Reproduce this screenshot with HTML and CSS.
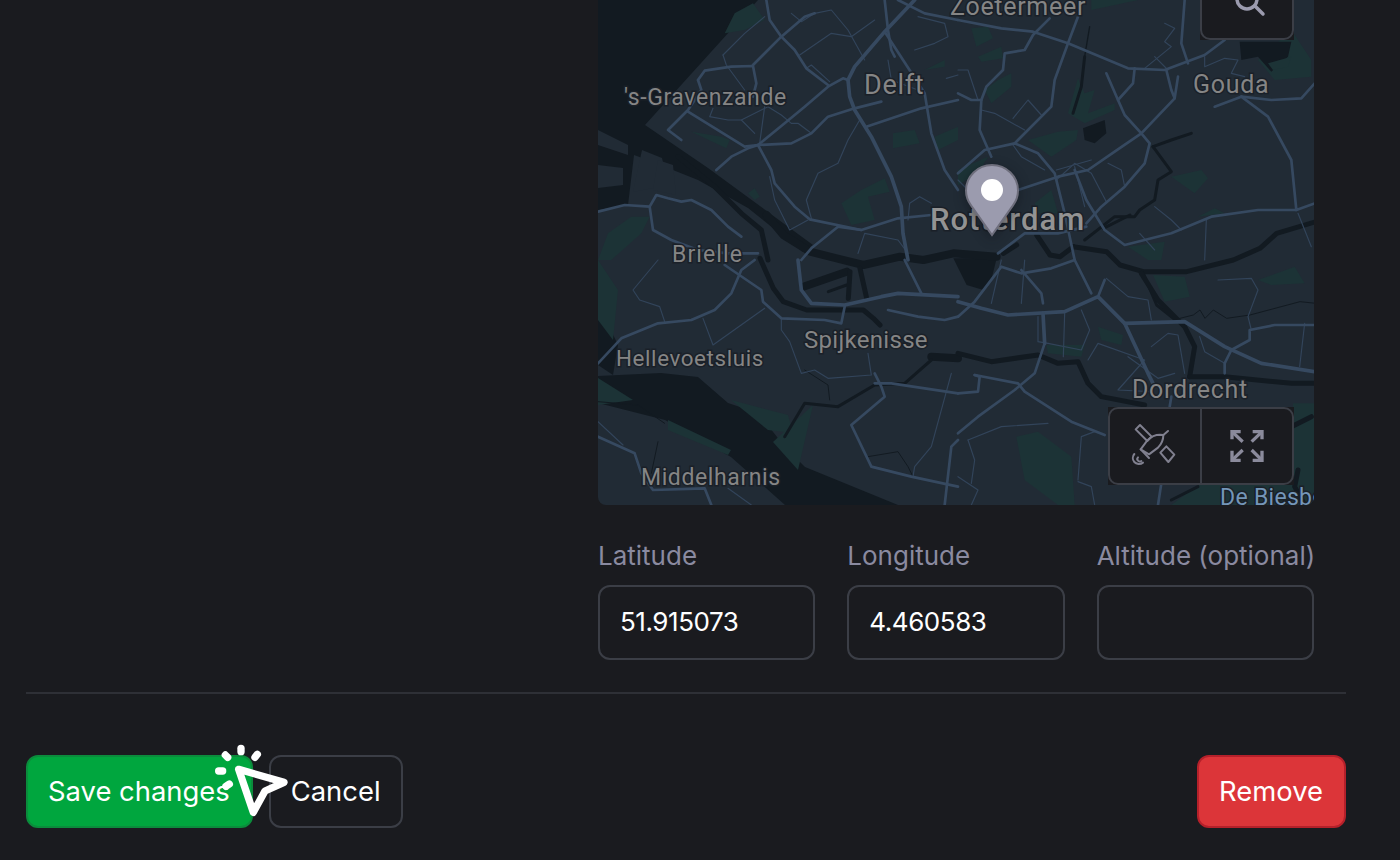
FILE: index.html
```html
<!DOCTYPE html>
<html lang="en">
<head>
<meta charset="utf-8">
<title>Edit location</title>
<link rel="stylesheet" href="styles.css">
</head>
<body>
<main class="page">
  <section class="location">
    <div class="location-col">
      <div class="map">
        <svg class="map-art" viewBox="0 0 716 505" width="716" height="505" aria-hidden="true">
          <!-- water bodies -->
          <polygon class="water" points="0,0 160,0 47,125 110,168 170,212 215,245 205,252 150,208 100,180 50,160 36,155 30,205 0,210"/>
          <polygon class="land" points="0,130 30,145 30,155 0,145"/>
          <polygon class="land" points="0,165 25,168 25,185 0,188"/>
          <polygon class="land" points="44,150 64,158 70,185 35,192"/>
          <polygon class="land" points="60,160 75,165 78,195 55,190"/>
          <polygon class="water" points="0,303 20,345 15,375 0,365"/>
          <polygon class="water" points="0,376 63,373 100,377 130,403 160,413 187,447 207,467 300,505 187,505 133,457 67,420 0,403"/>
          <polygon class="green" points="0,378 35,400 0,405"/>
          <polygon class="green" points="133,400 190,415 195,433 170,430"/>
          <polygon class="green" points="175,442 215,405 200,470"/>
          <polygon class="green" points="70,420 133,450 130,455 70,430"/>
          <polygon class="green" points="0,260 20,290 15,340 0,320"/>
          <!-- main rivers through the centre -->
          <g transform="translate(142 215) scale(.33333)">
            <polygon class="water" points="640,130 770,130 755,190 730,225 680,210 660,170"/>
            <g class="river">
              <polyline class="xwide" points="80,0 130,60 210,110 290,130 370,150 480,125 550,135 640,115 770,125"/>
              <polyline class="wide" points="60,130 100,220 130,260 200,285 370,285 400,310 420,330"/>
              <polyline class="xwide" points="190,215 320,170"/>
              <polyline points="265,230 320,210"/>
              <polyline class="wide" points="330,170 325,250"/>
              <polyline class="wide" points="360,160 380,250"/>
              <polyline class="wide" points="790,115 830,90"/>
            </g>
          </g>
          <g transform="translate(402 215) scale(.33333)">
            <g class="river">
              <polyline class="wide" points="110,60 150,120 180,125 220,95"/>
              <polyline class="wide" points="220,95 320,110 360,150 430,170 560,170 700,135 780,100 830,55 948,20"/>
              <polyline points="430,175 470,270 520,310"/>
              <polyline points="310,40 390,0"/>
            </g>
            <g class="thinblack">
              <polyline points="520,315 580,300 600,285 615,310 640,285 680,310 750,300 900,260 948,265"/>
            </g>
          </g>
          <!-- zoom quadrant 1 -->
          <g transform="scale(.33333)">
            <g class="green">
              <polygon points="380,100 410,40 465,10 500,60 440,90"/>
              <polygon points="885,400 950,390 965,430 885,445"/>
              <polygon points="1010,410 1080,380 1080,420 1020,450"/>
              <polygon points="730,610 790,570 860,535 875,575 810,590 830,660 760,675"/>
              <polygon points="280,395 370,410 395,420 385,445"/>
              <polygon points="0,780 30,700 100,650 155,650 130,700 40,780"/>
              <polygon points="450,580 470,565 485,590 470,600"/>
              <polygon points="980,210 1040,180 1040,200"/>
            </g>
            <g class="river">
              <polyline class="wide" points="240,470 350,560 430,640 490,690 510,780"/>
            </g>
            <g class="minor">
              <polyline points="375,165 440,100 500,50"/>
              <polyline points="375,165 385,195 440,270"/>
              <polyline points="580,40 610,65 650,40 700,30 750,90 800,180"/>
              <polyline points="605,165 700,100 760,110 830,60"/>
              <polyline points="625,205 640,195 695,245"/>
              <polyline points="640,400 600,370 580,370 550,345 510,320 430,360 470,400"/>
              <polyline points="500,320 485,430"/>
              <polyline points="345,325 335,350 390,360 430,360"/>
              <polyline points="785,360 750,420 720,490 660,520 625,600 640,655"/>
              <polyline points="515,530 530,600 575,690 630,660"/>
              <polyline points="780,760 800,700 900,720 930,760"/>
              <polyline points="930,660 935,610 965,590 1000,610"/>
              <polyline points="870,180 880,240 960,270"/>
              <polyline points="950,150 1010,130 1050,110 1040,70 960,50"/>
              <polyline points="1045,235 1080,225"/>
            </g>
            <g class="road">
              <polyline points="505,0 515,60 550,110 590,150 625,205 690,255"/>
              <polyline points="465,195 550,110 620,50 650,40"/>
              <polyline points="300,240 320,212 400,200 465,198 475,250 465,290"/>
              <polyline points="300,240 310,270 270,330 210,390 250,420"/>
              <polyline points="270,335 440,440 480,435 580,430 640,400 690,350 770,325 850,305"/>
              <polyline points="805,380 970,325 1080,300"/>
              <polyline points="355,510 400,470 450,445 480,435 560,370 620,320 690,260 735,235 750,240"/>
              <polyline points="480,435 520,510 530,550 590,620 635,658 790,690 900,655 1000,645"/>
              <polyline points="610,780 640,745 720,680 790,690"/>
              <polyline points="860,0 870,90 880,150 890,170"/>
              <polyline points="900,0 980,40 1080,60"/>
              <polyline points="860,95 980,280 1000,400 1040,510 1080,570"/>
              <polyline points="0,635 80,615 155,620 175,585 210,595 250,605 280,600 340,630 390,680 430,710"/>
              <polyline points="155,620 165,690 220,720 300,750 390,760 480,760"/>
              <polyline class="wide" points="750,240 770,200 860,95 950,0"/>
              <polyline class="wide" points="750,240 755,290 770,330 820,410 880,530 910,620 915,700 930,780"/>
            </g>
          </g>
          <!-- zoom quadrant 2 -->
          <g transform="translate(360 0) scale(.33333)">
            <g class="green">
              <polygon points="40,85 90,80 105,115 55,140"/>
              <polygon points="60,170 130,140 135,175 70,185"/>
              <polygon points="80,270 120,240 160,220 160,260 100,310"/>
              <polygon points="210,420 300,395 360,390 355,420 280,470"/>
              <polygon points="330,340 360,235 370,260 380,280 410,270 390,340 470,310 470,330 380,370"/>
              <polygon points="640,530 730,510 750,535 710,580"/>
              <polygon points="0,510 90,470 60,520 0,555"/>
              <polygon points="900,180 1000,90 1060,180 1060,230 950,240"/>
              <polygon points="720,650 770,625 800,640"/>
              <polygon points="510,740 620,725 610,780 570,780"/>
              <polygon points="230,610 280,570 300,640 240,640"/>
              <polygon points="400,0 540,0 400,30"/>
            </g>
            <polygon class="water" points="375,385 440,360 445,400 410,430 380,420"/>
            <polygon class="water" points="845,125 1000,125 990,170 940,215 900,170 850,180"/>
            <polygon class="green" points="930,190 1000,170 990,200 945,210"/>
            <g class="river">
              <polyline class="thin" points="395,80 380,170"/>
              <polyline points="380,170 370,260 345,340"/>
              <polyline points="585,440 640,420 700,400"/>
              <polyline points="585,440 640,515 600,540 590,600 545,630 530,650 470,650 380,720"/>
            </g>
            <g class="minor">
              <polyline points="0,210 30,210 60,300"/>
              <polyline points="165,355 210,300 250,345"/>
              <polyline points="70,330 110,340 200,390"/>
              <polyline points="165,435 190,470 260,510"/>
              <polyline points="620,70 650,85 620,125 640,140 560,205"/>
              <polyline points="590,170 630,210"/>
              <polyline points="740,170 740,200 800,175 840,180 820,220 860,230"/>
              <polyline points="590,620 640,660 670,690"/>
              <polyline points="745,660 740,780"/>
              <polyline points="545,700 590,750"/>
              <polyline points="450,490 490,510 500,560"/>
              <polyline points="295,510 400,480"/>
              <polyline points="295,540 350,490 400,520 445,605"/>
              <polyline points="350,500 380,620"/>
              <polyline points="1020,640 1060,740"/>
              <polyline points="0,540 60,600 50,650"/>
            </g>
            <g class="road">
              <polyline points="0,60 130,85 225,95 330,130 510,205 620,210 740,165 800,120"/>
              <polyline points="360,50 330,130 290,240 280,320 170,430"/>
              <polyline points="275,55 225,105 200,150 140,160 135,210 85,260 70,300 65,390 100,470"/>
              <polyline points="0,520 80,450 170,430 240,460 290,520 320,640 350,780"/>
              <polyline points="530,205 525,250 480,300"/>
              <polyline points="445,220 480,300 500,345 550,400 575,430 560,490 500,560 430,620 385,670"/>
              <polyline points="680,0 670,130 690,190"/>
              <polyline points="625,210 640,270 650,295 550,400 470,455 390,510 300,530 180,570"/>
              <polyline points="650,295 660,230"/>
              <polyline points="850,290 770,320"/>
              <polyline points="850,290 930,350 1000,480 1015,630 1070,610"/>
              <polyline points="850,290 940,300 1030,295 1070,250"/>
              <polyline points="1015,630 900,630 760,650 640,700 500,735 440,690 385,600 350,510"/>
              <polyline points="0,280 40,300 70,300"/>
              <polyline points="385,680 300,700 200,700 120,760"/>
            </g>
          </g>
          <!-- zoom quadrant 3 -->
          <g transform="translate(0 260) scale(.33333)">
            <g class="river">
              <polyline class="xwide" points="1000,290 1080,295"/>
              <polyline points="1000,300 920,370 830,375 720,440 620,430 560,530"/>
            </g>
            <g class="thinblack">
              <polyline points="620,330 690,375 695,420"/>
              <polyline points="810,590 900,575 930,620 945,650"/>
              <polyline points="160,640 180,545"/>
              <polyline points="0,425 120,435 200,490"/>
            </g>
            <g class="minor">
              <polyline points="180,0 105,90 125,120 185,140 200,185"/>
              <polyline points="315,175 345,255 500,145"/>
              <polyline points="550,175 550,210 575,245 610,340 650,330 690,355 820,345 810,280"/>
              <polyline points="1060,340 1000,560 950,620 945,650"/>
              <polyline points="0,485 75,555"/>
              <polyline points="390,685 460,735"/>
            </g>
            <g class="road">
              <polyline points="0,310 70,235 180,190 280,180 350,150 400,100 430,30 470,0"/>
              <polyline points="380,15 490,90 495,125 550,175 680,180 730,190 740,140"/>
              <polyline class="wide" points="600,0 610,90 640,130 740,135 850,110 900,100 1080,110"/>
              <polyline points="870,150 960,170 1040,180 1080,170"/>
              <polyline points="0,530 110,580 130,640 165,690 320,685 340,735"/>
              <polyline points="920,0 970,100"/>
              <polyline points="830,370 880,370 1080,400"/>
              <polyline points="830,340 850,380 860,410 760,495 820,620 940,650 1080,680"/>
              <polyline points="1080,540 1060,560 1040,735"/>
            </g>
          </g>
          <!-- zoom quadrant 4 -->
          <g transform="translate(360 260) scale(.33333)">
            <polygon class="green" points="640,735 720,675 1005,675 1005,430 1070,430 1070,735"/>
            <g class="green">
              <polygon points="420,200 495,225 490,255 430,240"/>
              <polygon points="265,255 380,255 370,290 270,280"/>
              <polygon points="585,45 680,50 695,110 620,125"/>
              <polygon points="900,60 1010,20 1040,70 940,75"/>
              <polygon points="175,530 240,515 340,590 350,735 300,735 200,660"/>
            </g>
            <g class="river">
              <polyline class="wide" points="0,280 100,305 240,285 300,310 360,305 390,370 430,410 560,435"/>
              <polyline class="wide" points="550,40 600,120 680,200 710,260 695,350"/>
              <polyline class="wide" points="695,350 800,350 1000,370 1070,370"/>
              <polyline class="wide" points="1000,500 1060,470"/>
              <polyline class="wide" points="1020,630 1010,680 1040,735"/>
              <polyline points="640,720 720,680"/>
            </g>
            <g class="minor">
              <polyline points="240,170 240,245 270,250"/>
              <polyline points="320,160 316,290"/>
              <polyline points="370,150 395,210 370,270 270,250"/>
              <polyline points="445,55 510,110 570,120 580,180"/>
              <polyline points="390,300 420,250 560,300 480,390 580,395"/>
              <polyline points="580,260 630,220 660,225 680,340"/>
              <polyline points="510,290 600,355 650,340"/>
              <polyline points="725,230 740,275 800,310"/>
              <polyline points="780,60 880,55 900,90 870,170 880,210"/>
              <polyline points="1040,190 1025,320"/>
              <polyline points="0,650 60,690 40,735"/>
              <polyline points="30,540 130,500 270,490"/>
              <polyline points="30,540 50,600 40,670"/>
              <polyline points="360,660 370,530 410,515"/>
              <polyline points="360,665 400,680 410,735"/>
              <polyline points="130,0 100,130"/>
              <polyline points="200,0 190,130"/>
            </g>
            <g class="road">
              <polyline class="wide" points="0,125 70,145 150,165 320,155 420,110 500,190 570,340 585,370"/>
              <polyline points="420,110 440,60"/>
              <polyline points="350,0 400,100"/>
              <polyline class="wide" points="500,190 680,185 800,260 910,310 1070,335"/>
              <polyline points="0,170 50,125 130,20 190,40 280,25 350,0"/>
              <polyline class="wide" points="255,160 260,250"/>
              <polyline points="260,250 230,340 170,390 60,470 0,520"/>
              <polyline points="800,340 800,310 820,270 875,240 875,210 950,195 1070,195"/>
              <polyline points="50,345 180,370 200,395 340,485 440,525"/>
              <polyline points="0,400 60,395 65,350 50,345"/>
              <polyline points="190,30 250,100 255,130"/>
              <polyline points="635,440 640,410"/>
              <polyline points="610,670 600,735"/>
            </g>
          </g>
          <!-- place labels -->
          <text class="label" x="352" y="15">Zoetermeer</text>
          <text class="label label-lg" x="266" y="94">Delft</text>
          <text class="label" x="595" y="93">Gouda</text>
          <text class="label label-sm" x="26" y="105">'s-Gravenzande</text>
          <text class="label label-bold" x="332" y="230">Rotterdam</text>
          <text class="label label-brielle" x="74" y="262">Brielle</text>
          <text class="label label-spijk" x="206" y="348">Spijkenisse</text>
          <text class="label label-hell" x="18" y="366">Hellevoetsluis</text>
          <text class="label" x="534" y="398">Dordrecht</text>
          <text class="label label-sm" x="43" y="485">Middelharnis</text>
          <text class="label label-water" x="622" y="505">De Biesbosch</text>
        </svg>

        <svg class="pin" viewBox="0 0 56 74" width="56" height="74" aria-hidden="true">
          <path class="pin-body" d="M28 2C13.6 2 2 13.4 2 27.4c0 5.6 1.900 10.700 5 14.900L28 72l21-29.700c3.100-4.200 5-9.300 5-14.900C54 13.400 42.400 2 28 2z"/>
          <circle class="pin-dot" cx="28" cy="27" r="11"/>
        </svg>

        <div class="ctrl ctrl-search">
          <button class="ctrl-btn" type="button" aria-label="Search">
            <svg viewBox="0 0 40 40" width="40" height="40" aria-hidden="true">
              <circle class="icon-stroke" cx="20" cy="17" r="10"/>
              <line class="icon-stroke" x1="28" y1="24" x2="36" y2="32"/>
            </svg>
          </button>
        </div>

        <div class="ctrl ctrl-group">
          <button class="ctrl-btn" type="button" aria-label="Satellite view">
            <svg viewBox="80 50 180 180" width="60" height="60" aria-hidden="true">
              <g class="icon-thin">
                <polygon points="112,90 125,77 160,112 147,125"/>
                <polygon points="186,160 204,141 228,166 210,188"/>
                <path d="M127 150l20-27c10-10 25-17 38-17l10 1c0 14-6 28-16 38l-27 20z"/>
                <line x1="127" y1="150" x2="152" y2="176"/>
                <line x1="196" y1="106" x2="209" y2="95"/>
                <path d="M108 164c-6 7-6 17 0 24s18 8 26 2"/>
                <path d="M119 174c-3 3-3 7 0 10s7 3 10 1"/>
              </g>
            </svg>
          </button>
          <button class="ctrl-btn" type="button" aria-label="Fullscreen">
            <svg viewBox="351 48 180 180" width="60" height="60" aria-hidden="true">
              <g class="icon-bold">
                <polyline points="396,118 396,95 422,95"/><line x1="398" y1="97" x2="428" y2="125"/>
                <polyline points="458,95 486,95 486,118"/><line x1="484" y1="97" x2="455" y2="125"/>
                <polyline points="396,152 396,181 422,181"/><line x1="398" y1="179" x2="428" y2="150"/>
                <polyline points="486,152 486,181 458,181"/><line x1="484" y1="179" x2="455" y2="150"/>
              </g>
            </svg>
          </button>
        </div>
      </div>

      <div class="coords">
        <label class="field">
          <span class="field-label">Latitude</span>
          <input class="field-input" type="text" value="51.915073">
        </label>
        <label class="field">
          <span class="field-label">Longitude</span>
          <input class="field-input" type="text" value="4.460583">
        </label>
        <label class="field">
          <span class="field-label">Altitude (optional)</span>
          <input class="field-input" type="text" value="">
        </label>
      </div>
    </div>
  </section>

  <hr class="rule">

  <footer class="actions">
    <div class="actions-left">
      <button class="btn btn-save" type="button">Save changes</button>
      <button class="btn btn-cancel" type="button">Cancel</button>
      <svg class="cursor" viewBox="30 15 330 270" width="110" height="90" aria-hidden="true">
        <path class="cursor-arrow" d="M146 103L282 142 225 168 190 232z"/>
        <g class="cursor-spark">
          <line x1="153" y1="40" x2="153" y2="50"/>
          <line x1="106" y1="60" x2="113" y2="67"/>
          <line x1="202" y1="58" x2="195" y2="67"/>
          <line x1="86" y1="108" x2="98" y2="108"/>
          <line x1="118" y1="147" x2="108" y2="154"/>
        </g>
      </svg>
    </div>
    <button class="btn btn-remove" type="button">Remove</button>
  </footer>
</main>
</body>
</html>
```

FILE: styles.css
```css
* { box-sizing: border-box; }

html, body {
  margin: 0;
  height: 100%;
  background: #1a1b1f;
  overflow: hidden;
}

body {
  font-family: Inter, "Liberation Sans", sans-serif;
  color: #fff;
}

.page {
  width: 1400px;
  height: 860px;
  padding: 0 54px 32px 26px;
  display: flex;
  flex-direction: column;
}

.location {
  display: flex;
  justify-content: flex-end;
  padding-right: 32px;
}

.location-col { width: 716px; }

/* map */
.map {
  position: relative;
  height: 505px;
  background: #212b35;
  border-radius: 0 0 8px 8px;
  overflow: hidden;
}

.map-art { display: block; }

.water { fill: #121a21; }
.land { fill: #212b35; }
.green, .green polygon { fill: #1c3336; }

.road polyline, .minor polyline, .river polyline, .thinblack polyline {
  fill: none;
  stroke-linejoin: round;
  stroke-linecap: round;
}
.road polyline { stroke: #364960; stroke-width: 8; }
.road polyline.wide { stroke-width: 11; }
.minor polyline { stroke: #32445a; stroke-width: 3.500; }
.river polyline { stroke: #121a21; stroke-width: 9; }
.river polyline.thin { stroke-width: 4; }
.river polyline.wide { stroke-width: 15; }
.river polyline.xwide { stroke-width: 24; }
.thinblack polyline { stroke: #121a21; stroke-width: 3; }

.label {
  font-family: Roboto, "Liberation Sans", sans-serif;
  font-size: 25px;
  letter-spacing: .7px;
  fill: #858585;
  stroke: #1a2028;
  stroke-width: 3px;
  paint-order: stroke;
}
.label-lg { font-size: 27px; }
.label-sm { font-size: 23px; letter-spacing: .6px; }
.label-brielle { font-size: 23px; letter-spacing: 1.100px; }
.label-spijk { font-size: 24px; letter-spacing: .3px; }
.label-hell { font-size: 22.400px; letter-spacing: .6px; }
.label-bold { font-size: 31px; font-weight: 500; fill: #939393; letter-spacing: 1px; }
.label-water { font-size: 23px; letter-spacing: .3px; fill: #7496b8; }

.pin {
  position: absolute;
  left: 366px;
  top: 163px;
  filter: drop-shadow(0 3px 6px rgba(10, 14, 20, .45));
}
.pin-body { fill: #9b9bae; stroke: #6e6e7c; stroke-width: 2; }
.pin-dot { fill: #fff; }

/* map controls */
.ctrl {
  position: absolute;
  right: 20px;
  display: flex;
  background: #1a1b1f;
}
.ctrl-search { top: -37px; height: 77px; width: 94px; }
.ctrl-group { top: 407px; height: 78px; width: 186px; }

.ctrl-btn {
  flex: 1;
  display: flex;
  align-items: center;
  justify-content: center;
  padding: 0;
  background: #1a1b1f;
  border: 2px solid #3b3e46;
  border-radius: 10px;
}
.ctrl-group .ctrl-btn:first-child {
  border-right-width: 1px;
  border-radius: 10px 0 0 10px;
}
.ctrl-group .ctrl-btn:last-child {
  border-left-width: 1px;
  border-radius: 0 10px 10px 0;
}

.icon-stroke { fill: none; stroke: #9b9bae; stroke-width: 3.500; stroke-linecap: round; }
.icon-thin * { fill: none; stroke: #80808f; stroke-width: 6; stroke-linejoin: round; stroke-linecap: round; }
.icon-bold * { fill: none; stroke: #8b8b9c; stroke-width: 10; }

/* coordinate fields */
.coords {
  margin-top: 36px;
  display: grid;
  grid-template-columns: repeat(3, minmax(0, 1fr));
  column-gap: 32px;
}
.field { display: flex; flex-direction: column; min-width: 0; }
.field-label {
  font-size: 26px;
  line-height: 30px;
  color: #8a8aa0;
  white-space: nowrap;
}
.field-input {
  margin-top: 14px;
  width: 100%;
  height: 75px;
  padding: 0 20px 3px;
  font: 26px Inter, "Liberation Sans", sans-serif;
  letter-spacing: -.45px;
  color: #fff;
  background: #1a1b1f;
  border: 2px solid #3b3e46;
  border-radius: 12px;
  outline: none;
}

.rule {
  margin: 32px 0 0;
  height: 2px;
  border: 0;
  background: #2e3036;
}

/* footer */
.actions {
  margin-top: 61px;
  display: flex;
  justify-content: space-between;
}
.actions-left {
  position: relative;
  display: flex;
  gap: 16px;
}
.btn {
  height: 73px;
  padding: 0 21px 2px 20px;
  font: 27.400px Inter, "Liberation Sans", sans-serif;
  color: #fff;
  border: 2px solid;
  border-radius: 12px;
}
.btn-save { background: #00a63e; border-color: #0b8c3c; }
.btn-cancel { padding: 0 20px 2px; background: #1a1b1f; border-color: #3b3e46; }
.btn-remove { background: #dc3539; border-color: #b5202a; }

.cursor {
  position: absolute;
  left: 174px;
  top: -15px;
  pointer-events: none;
}
.cursor-arrow { fill: none; stroke: #fff; stroke-width: 22; stroke-linejoin: round; }
.cursor-spark line { stroke: #fff; stroke-width: 22; stroke-linecap: round; }
```
